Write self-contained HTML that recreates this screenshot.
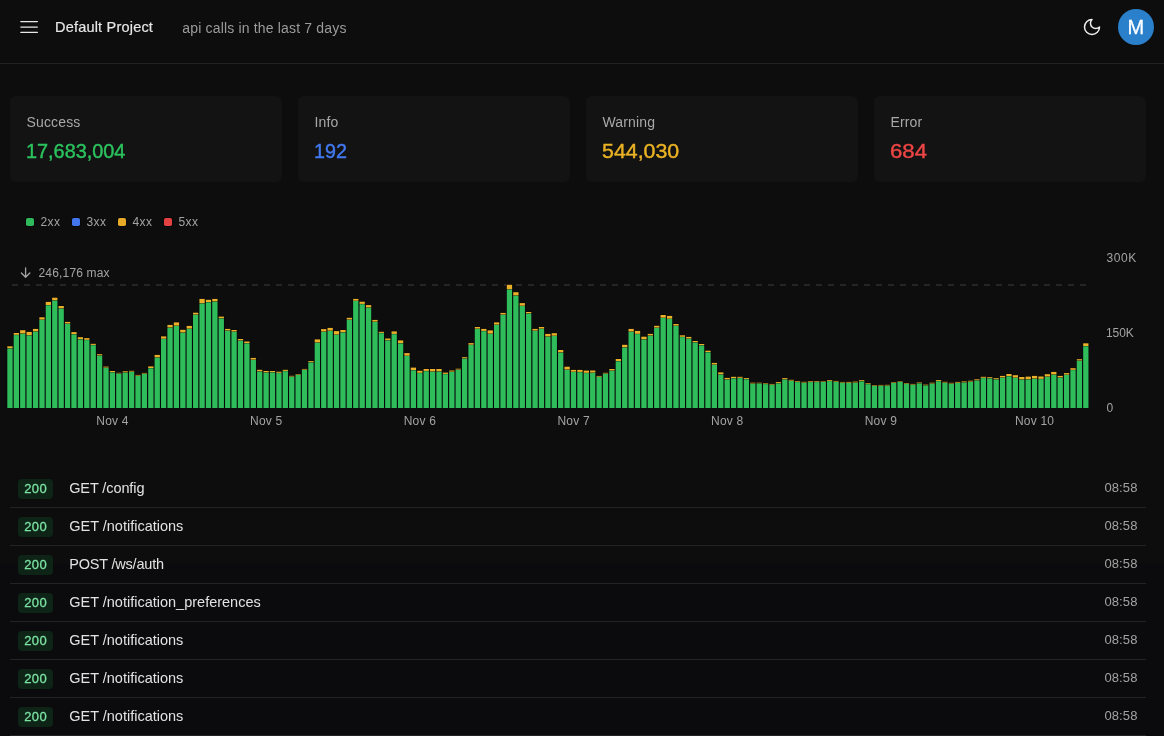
<!DOCTYPE html>
<html lang="en"><head><meta charset="utf-8"><title>Default Project</title>
<style>
*{box-sizing:border-box;margin:0;padding:0}
html,body{width:1164px;height:736px;overflow:hidden;background:linear-gradient(#0d0d0d 0,#0d0d0d 561px,#0b0b0d 566px,#0b0b0d 736px);color:#e5e5e5;font-family:"Liberation Sans",sans-serif}
.header{position:absolute;left:0;top:0;width:1164px;height:64px;border-bottom:1px solid #222224}
.burger{position:absolute;left:20px;top:21px;width:18px;height:14px}
.title{position:absolute;left:55px;top:17px;font-size:14.5px;line-height:20px;color:#e6e6e6;white-space:nowrap;-webkit-text-stroke:0.18px #e6e6e6;letter-spacing:0.2px}
.sub{position:absolute;left:182.3px;top:18px;font-size:14px;line-height:20px;color:#9b9b9b;white-space:nowrap;letter-spacing:0.17px}
.moon{position:absolute;left:1082px;top:17px;width:20px;height:20px}
.avatar{position:absolute;left:1118px;top:9px;width:36px;height:36px;border-radius:50%;background:#2a80cb;color:#fff;font-size:20px;line-height:36px;text-align:center;-webkit-text-stroke:0.3px #fff;text-indent:-0.5px}
.card{position:absolute;top:96px;width:272px;height:86px;background:#131313;border-radius:6px}
.card .l{position:absolute;left:16.5px;top:16px;font-size:14px;line-height:20px;color:#a8a8a8;white-space:nowrap;letter-spacing:0.15px}
.card .v{position:absolute;left:16px;top:41px;font-size:20px;line-height:28px;white-space:nowrap;-webkit-text-stroke:0.4px currentColor;transform-origin:0 50%}
.legend{position:absolute;left:26px;top:214px;height:16px;font-size:12px;line-height:16px;color:#a3a3a3;white-space:nowrap}
.legend i{position:absolute;top:4px;width:8px;height:8px;border-radius:1.8px;box-shadow:0 0 0 0.5px #060608}
.legend span{position:absolute;top:0;letter-spacing:0.4px;margin-left:0.5px}
svg.chart{position:absolute;left:0;top:0;width:1164px;height:440px}
.ax{font-family:"Liberation Sans",sans-serif;font-size:12px;fill:#a3a3a3}
.list{position:absolute;left:10px;top:470px;width:1136px}
.row{position:relative;height:38px;border-bottom:1px solid #232325}
.badge{position:absolute;left:8px;top:9px;width:35px;height:20px;letter-spacing:0.3px;text-indent:0.3px;border-radius:4px;background:#0d2417;color:#7ce2a2;font-size:13px;line-height:20px;text-align:center;-webkit-text-stroke:0.3px currentColor}
.path{position:absolute;left:59.2px;top:8px;font-size:14.5px;line-height:20px;color:#e2e2e2;white-space:nowrap}
.time{position:absolute;right:8.5px;letter-spacing:0.1px;top:8px;font-size:13px;line-height:20px;color:#a3a3a3;white-space:nowrap}
#wrap{position:absolute;left:0;top:0;width:1164px;height:736px;will-change:transform}
</style></head><body><div id="wrap">
<div class="header">
 <svg class="burger" viewBox="0 0 18 14"><path d="M0.9 0.6h16.4M0.9 6.05h16.4M0.9 11.4h16.4" stroke="#e8e8e8" stroke-width="1.35" stroke-linecap="round" fill="none"/></svg>
 <div class="title">Default Project</div>
 <div class="sub">api calls in the last 7 days</div>
 <svg class="moon" viewBox="0 0 24 24" fill="none" stroke="#ededed" stroke-width="1.8" stroke-linecap="round" stroke-linejoin="round"><path d="M12 3a6 6 0 0 0 9 9 9 9 0 1 1-9-9Z"/></svg>
 <div class="avatar">M</div>
</div>
<div class="card" style="left:10px"><div class="l">Success</div><div class="v" style="color:#2cc35e;transform:scaleX(0.993)">17,683,004</div></div>
<div class="card" style="left:298px"><div class="l">Info</div><div class="v" style="color:#4279f0;transform:scaleX(0.985)">192</div></div>
<div class="card" style="left:586px"><div class="l">Warning</div><div class="v" style="color:#eab224;transform:scaleX(1.068)">544,030</div></div>
<div class="card" style="left:874px"><div class="l">Error</div><div class="v" style="color:#ee4545;transform:scaleX(1.11)">684</div></div>
<div class="legend">
 <i style="left:0;background:#2eb95a"></i><span style="left:14px">2xx</span>
 <i style="left:46px;background:#4275ee"></i><span style="left:60px">3xx</span>
 <i style="left:92px;background:#e6aa28"></i><span style="left:106px">4xx</span>
 <i style="left:138px;background:#e44242"></i><span style="left:152px">5xx</span>
</div>
<svg class="chart" viewBox="0 0 1164 440">
 <path d="M25.6 267.8v9.4M21.4 273l4.2 4.2 4.2-4.2" stroke="#a3a3a3" stroke-width="1.3" fill="none" stroke-linecap="round" stroke-linejoin="round"/>
 <text x="38.5" y="276.5" class="ax" style="letter-spacing:0.17px">246,176 max</text>
 <line x1="12" y1="285" x2="1089" y2="285" stroke="#2e2e31" stroke-width="1.4" stroke-dasharray="6 6"/>
 <rect x="6.75" y="345.75" width="6.40" height="62.30" fill="#060608"/>
<rect x="7.30" y="348.50" width="5.30" height="59.50" fill="#2fbd5c"/>
<rect x="7.30" y="346.30" width="5.30" height="1.90" fill="#eab02a"/>
<rect x="13.15" y="332.45" width="6.40" height="75.60" fill="#060608"/>
<rect x="13.70" y="335.10" width="5.30" height="72.90" fill="#2fbd5c"/>
<rect x="13.70" y="333.00" width="5.30" height="1.80" fill="#eab02a"/>
<rect x="19.56" y="329.65" width="6.40" height="78.40" fill="#060608"/>
<rect x="20.11" y="333.70" width="5.30" height="74.30" fill="#2fbd5c"/>
<rect x="20.11" y="330.20" width="5.30" height="3.20" fill="#eab02a"/>
<rect x="25.96" y="331.35" width="6.40" height="76.70" fill="#060608"/>
<rect x="26.51" y="335.50" width="5.30" height="72.50" fill="#2fbd5c"/>
<rect x="26.51" y="331.90" width="5.30" height="3.30" fill="#eab02a"/>
<rect x="32.37" y="328.35" width="6.40" height="79.70" fill="#060608"/>
<rect x="32.92" y="331.60" width="5.30" height="76.40" fill="#2fbd5c"/>
<rect x="32.92" y="328.90" width="5.30" height="2.40" fill="#eab02a"/>
<rect x="38.77" y="316.75" width="6.40" height="91.30" fill="#060608"/>
<rect x="39.32" y="319.90" width="5.30" height="88.10" fill="#2fbd5c"/>
<rect x="39.32" y="317.30" width="5.30" height="2.30" fill="#eab02a"/>
<rect x="45.17" y="301.35" width="6.40" height="106.70" fill="#060608"/>
<rect x="45.72" y="305.30" width="5.30" height="102.70" fill="#2fbd5c"/>
<rect x="45.72" y="301.90" width="5.30" height="3.10" fill="#eab02a"/>
<rect x="51.58" y="297.15" width="6.40" height="110.90" fill="#060608"/>
<rect x="52.13" y="300.50" width="5.30" height="107.50" fill="#2fbd5c"/>
<rect x="52.13" y="297.70" width="5.30" height="2.50" fill="#eab02a"/>
<rect x="57.98" y="305.45" width="6.40" height="102.60" fill="#060608"/>
<rect x="58.53" y="308.60" width="5.30" height="99.40" fill="#2fbd5c"/>
<rect x="58.53" y="306.00" width="5.30" height="2.30" fill="#eab02a"/>
<rect x="64.39" y="321.35" width="6.40" height="86.70" fill="#060608"/>
<rect x="64.94" y="323.80" width="5.30" height="84.20" fill="#2fbd5c"/>
<rect x="64.94" y="321.90" width="5.30" height="1.60" fill="#eab02a"/>
<rect x="70.79" y="331.55" width="6.40" height="76.50" fill="#060608"/>
<rect x="71.34" y="334.40" width="5.30" height="73.60" fill="#2fbd5c"/>
<rect x="71.34" y="332.10" width="5.30" height="2.00" fill="#eab02a"/>
<rect x="77.19" y="336.65" width="6.40" height="71.40" fill="#060608"/>
<rect x="77.74" y="339.40" width="5.30" height="68.60" fill="#2fbd5c"/>
<rect x="77.74" y="337.20" width="5.30" height="1.90" fill="#eab02a"/>
<rect x="83.60" y="337.55" width="6.40" height="70.50" fill="#060608"/>
<rect x="84.15" y="340.10" width="5.30" height="67.90" fill="#2fbd5c"/>
<rect x="84.15" y="338.10" width="5.30" height="1.70" fill="#eab02a"/>
<rect x="90.00" y="343.25" width="6.40" height="64.80" fill="#060608"/>
<rect x="90.55" y="345.20" width="5.30" height="62.80" fill="#2fbd5c"/>
<rect x="90.55" y="343.80" width="5.30" height="1.10" fill="#eab02a"/>
<rect x="96.41" y="353.65" width="6.40" height="54.40" fill="#060608"/>
<rect x="96.96" y="355.60" width="5.30" height="52.40" fill="#2fbd5c"/>
<rect x="96.96" y="354.20" width="5.30" height="1.10" fill="#eab02a"/>
<rect x="102.81" y="366.05" width="6.40" height="42.00" fill="#060608"/>
<rect x="103.36" y="367.80" width="5.30" height="40.20" fill="#2fbd5c"/>
<rect x="103.36" y="366.60" width="5.30" height="0.90" fill="#eab02a"/>
<rect x="109.21" y="370.45" width="6.40" height="37.60" fill="#060608"/>
<rect x="109.76" y="372.40" width="5.30" height="35.60" fill="#2fbd5c"/>
<rect x="109.76" y="371.00" width="5.30" height="1.10" fill="#eab02a"/>
<rect x="115.62" y="372.25" width="6.40" height="35.80" fill="#060608"/>
<rect x="116.17" y="373.60" width="5.30" height="34.40" fill="#2fbd5c"/>
<rect x="116.17" y="372.80" width="5.30" height="0.50" fill="#eab02a"/>
<rect x="122.02" y="370.75" width="6.40" height="37.30" fill="#060608"/>
<rect x="122.57" y="372.60" width="5.30" height="35.40" fill="#2fbd5c"/>
<rect x="122.57" y="371.30" width="5.30" height="1.00" fill="#eab02a"/>
<rect x="128.43" y="370.25" width="6.40" height="37.80" fill="#060608"/>
<rect x="128.98" y="371.90" width="5.30" height="36.10" fill="#2fbd5c"/>
<rect x="128.98" y="370.80" width="5.30" height="0.80" fill="#eab02a"/>
<rect x="134.83" y="374.35" width="6.40" height="33.70" fill="#060608"/>
<rect x="135.38" y="375.90" width="5.30" height="32.10" fill="#2fbd5c"/>
<rect x="135.38" y="374.90" width="5.30" height="0.70" fill="#eab02a"/>
<rect x="141.23" y="372.35" width="6.40" height="35.70" fill="#060608"/>
<rect x="141.78" y="373.80" width="5.30" height="34.20" fill="#2fbd5c"/>
<rect x="141.78" y="372.90" width="5.30" height="0.60" fill="#eab02a"/>
<rect x="147.64" y="365.85" width="6.40" height="42.20" fill="#060608"/>
<rect x="148.19" y="368.30" width="5.30" height="39.70" fill="#2fbd5c"/>
<rect x="148.19" y="366.40" width="5.30" height="1.60" fill="#eab02a"/>
<rect x="154.04" y="354.35" width="6.40" height="53.70" fill="#060608"/>
<rect x="154.59" y="357.60" width="5.30" height="50.40" fill="#2fbd5c"/>
<rect x="154.59" y="354.90" width="5.30" height="2.40" fill="#eab02a"/>
<rect x="160.45" y="335.85" width="6.40" height="72.20" fill="#060608"/>
<rect x="161.00" y="339.00" width="5.30" height="69.00" fill="#2fbd5c"/>
<rect x="161.00" y="336.40" width="5.30" height="2.30" fill="#eab02a"/>
<rect x="166.85" y="324.35" width="6.40" height="83.70" fill="#060608"/>
<rect x="167.40" y="327.70" width="5.30" height="80.30" fill="#2fbd5c"/>
<rect x="167.40" y="324.90" width="5.30" height="2.50" fill="#eab02a"/>
<rect x="173.25" y="321.85" width="6.40" height="86.20" fill="#060608"/>
<rect x="173.80" y="325.90" width="5.30" height="82.10" fill="#2fbd5c"/>
<rect x="173.80" y="322.40" width="5.30" height="3.20" fill="#eab02a"/>
<rect x="179.66" y="329.25" width="6.40" height="78.80" fill="#060608"/>
<rect x="180.21" y="332.70" width="5.30" height="75.30" fill="#2fbd5c"/>
<rect x="180.21" y="329.80" width="5.30" height="2.60" fill="#eab02a"/>
<rect x="186.06" y="325.35" width="6.40" height="82.70" fill="#060608"/>
<rect x="186.61" y="328.90" width="5.30" height="79.10" fill="#2fbd5c"/>
<rect x="186.61" y="325.90" width="5.30" height="2.70" fill="#eab02a"/>
<rect x="192.47" y="312.15" width="6.40" height="95.90" fill="#060608"/>
<rect x="193.02" y="314.80" width="5.30" height="93.20" fill="#2fbd5c"/>
<rect x="193.02" y="312.70" width="5.30" height="1.80" fill="#eab02a"/>
<rect x="198.87" y="298.35" width="6.40" height="109.70" fill="#060608"/>
<rect x="199.42" y="303.50" width="5.30" height="104.50" fill="#2fbd5c"/>
<rect x="199.42" y="298.90" width="5.30" height="4.30" fill="#eab02a"/>
<rect x="205.27" y="299.25" width="6.40" height="108.80" fill="#060608"/>
<rect x="205.82" y="302.30" width="5.30" height="105.70" fill="#2fbd5c"/>
<rect x="205.82" y="299.80" width="5.30" height="2.20" fill="#eab02a"/>
<rect x="211.68" y="298.35" width="6.40" height="109.70" fill="#060608"/>
<rect x="212.23" y="301.60" width="5.30" height="106.40" fill="#2fbd5c"/>
<rect x="212.23" y="298.90" width="5.30" height="2.40" fill="#eab02a"/>
<rect x="218.08" y="316.05" width="6.40" height="92.00" fill="#060608"/>
<rect x="218.63" y="318.50" width="5.30" height="89.50" fill="#2fbd5c"/>
<rect x="218.63" y="316.60" width="5.30" height="1.60" fill="#eab02a"/>
<rect x="224.49" y="328.35" width="6.40" height="79.70" fill="#060608"/>
<rect x="225.04" y="330.70" width="5.30" height="77.30" fill="#2fbd5c"/>
<rect x="225.04" y="328.90" width="5.30" height="1.50" fill="#eab02a"/>
<rect x="230.89" y="329.45" width="6.40" height="78.60" fill="#060608"/>
<rect x="231.44" y="331.80" width="5.30" height="76.20" fill="#2fbd5c"/>
<rect x="231.44" y="330.00" width="5.30" height="1.50" fill="#eab02a"/>
<rect x="237.29" y="338.45" width="6.40" height="69.60" fill="#060608"/>
<rect x="237.84" y="340.60" width="5.30" height="67.40" fill="#2fbd5c"/>
<rect x="237.84" y="339.00" width="5.30" height="1.30" fill="#eab02a"/>
<rect x="243.70" y="340.95" width="6.40" height="67.10" fill="#060608"/>
<rect x="244.25" y="343.40" width="5.30" height="64.60" fill="#2fbd5c"/>
<rect x="244.25" y="341.50" width="5.30" height="1.60" fill="#eab02a"/>
<rect x="250.10" y="357.35" width="6.40" height="50.70" fill="#060608"/>
<rect x="250.65" y="359.90" width="5.30" height="48.10" fill="#2fbd5c"/>
<rect x="250.65" y="357.90" width="5.30" height="1.70" fill="#eab02a"/>
<rect x="256.51" y="369.25" width="6.40" height="38.80" fill="#060608"/>
<rect x="257.06" y="371.50" width="5.30" height="36.50" fill="#2fbd5c"/>
<rect x="257.06" y="369.80" width="5.30" height="1.40" fill="#eab02a"/>
<rect x="262.91" y="370.45" width="6.40" height="37.60" fill="#060608"/>
<rect x="263.46" y="372.60" width="5.30" height="35.40" fill="#2fbd5c"/>
<rect x="263.46" y="371.00" width="5.30" height="1.30" fill="#eab02a"/>
<rect x="269.31" y="370.45" width="6.40" height="37.60" fill="#060608"/>
<rect x="269.86" y="372.40" width="5.30" height="35.60" fill="#2fbd5c"/>
<rect x="269.86" y="371.00" width="5.30" height="1.10" fill="#eab02a"/>
<rect x="275.72" y="371.15" width="6.40" height="36.90" fill="#060608"/>
<rect x="276.27" y="373.10" width="5.30" height="34.90" fill="#2fbd5c"/>
<rect x="276.27" y="371.70" width="5.30" height="1.10" fill="#eab02a"/>
<rect x="282.12" y="369.25" width="6.40" height="38.80" fill="#060608"/>
<rect x="282.67" y="371.20" width="5.30" height="36.80" fill="#2fbd5c"/>
<rect x="282.67" y="369.80" width="5.30" height="1.10" fill="#eab02a"/>
<rect x="288.53" y="375.25" width="6.40" height="32.80" fill="#060608"/>
<rect x="289.08" y="376.80" width="5.30" height="31.20" fill="#2fbd5c"/>
<rect x="289.08" y="375.80" width="5.30" height="0.70" fill="#eab02a"/>
<rect x="294.93" y="373.45" width="6.40" height="34.60" fill="#060608"/>
<rect x="295.48" y="374.90" width="5.30" height="33.10" fill="#2fbd5c"/>
<rect x="295.48" y="374.00" width="5.30" height="0.60" fill="#eab02a"/>
<rect x="301.33" y="368.35" width="6.40" height="39.70" fill="#060608"/>
<rect x="301.88" y="369.90" width="5.30" height="38.10" fill="#2fbd5c"/>
<rect x="301.88" y="368.90" width="5.30" height="0.70" fill="#eab02a"/>
<rect x="307.74" y="360.55" width="6.40" height="47.50" fill="#060608"/>
<rect x="308.29" y="362.50" width="5.30" height="45.50" fill="#2fbd5c"/>
<rect x="308.29" y="361.10" width="5.30" height="1.10" fill="#eab02a"/>
<rect x="314.14" y="338.85" width="6.40" height="69.20" fill="#060608"/>
<rect x="314.69" y="342.70" width="5.30" height="65.30" fill="#2fbd5c"/>
<rect x="314.69" y="339.40" width="5.30" height="3.00" fill="#eab02a"/>
<rect x="320.55" y="328.55" width="6.40" height="79.50" fill="#060608"/>
<rect x="321.10" y="331.80" width="5.30" height="76.20" fill="#2fbd5c"/>
<rect x="321.10" y="329.10" width="5.30" height="2.40" fill="#eab02a"/>
<rect x="326.95" y="327.35" width="6.40" height="80.70" fill="#060608"/>
<rect x="327.50" y="330.90" width="5.30" height="77.10" fill="#2fbd5c"/>
<rect x="327.50" y="327.90" width="5.30" height="2.70" fill="#eab02a"/>
<rect x="333.35" y="330.55" width="6.40" height="77.50" fill="#060608"/>
<rect x="333.90" y="334.80" width="5.30" height="73.20" fill="#2fbd5c"/>
<rect x="333.90" y="331.10" width="5.30" height="3.40" fill="#eab02a"/>
<rect x="339.76" y="329.45" width="6.40" height="78.60" fill="#060608"/>
<rect x="340.31" y="332.50" width="5.30" height="75.50" fill="#2fbd5c"/>
<rect x="340.31" y="330.00" width="5.30" height="2.20" fill="#eab02a"/>
<rect x="346.16" y="317.25" width="6.40" height="90.80" fill="#060608"/>
<rect x="346.71" y="319.80" width="5.30" height="88.20" fill="#2fbd5c"/>
<rect x="346.71" y="317.80" width="5.30" height="1.70" fill="#eab02a"/>
<rect x="352.57" y="298.35" width="6.40" height="109.70" fill="#060608"/>
<rect x="353.12" y="301.00" width="5.30" height="107.00" fill="#2fbd5c"/>
<rect x="353.12" y="298.90" width="5.30" height="1.80" fill="#eab02a"/>
<rect x="358.97" y="301.15" width="6.40" height="106.90" fill="#060608"/>
<rect x="359.52" y="304.20" width="5.30" height="103.80" fill="#2fbd5c"/>
<rect x="359.52" y="301.70" width="5.30" height="2.20" fill="#eab02a"/>
<rect x="365.37" y="304.55" width="6.40" height="103.50" fill="#060608"/>
<rect x="365.92" y="307.70" width="5.30" height="100.30" fill="#2fbd5c"/>
<rect x="365.92" y="305.10" width="5.30" height="2.30" fill="#eab02a"/>
<rect x="371.78" y="319.35" width="6.40" height="88.70" fill="#060608"/>
<rect x="372.33" y="321.90" width="5.30" height="86.10" fill="#2fbd5c"/>
<rect x="372.33" y="319.90" width="5.30" height="1.70" fill="#eab02a"/>
<rect x="378.18" y="331.25" width="6.40" height="76.80" fill="#060608"/>
<rect x="378.73" y="333.20" width="5.30" height="74.80" fill="#2fbd5c"/>
<rect x="378.73" y="331.80" width="5.30" height="1.10" fill="#eab02a"/>
<rect x="384.59" y="337.95" width="6.40" height="70.10" fill="#060608"/>
<rect x="385.14" y="340.40" width="5.30" height="67.60" fill="#2fbd5c"/>
<rect x="385.14" y="338.50" width="5.30" height="1.60" fill="#eab02a"/>
<rect x="390.99" y="330.85" width="6.40" height="77.20" fill="#060608"/>
<rect x="391.54" y="334.20" width="5.30" height="73.80" fill="#2fbd5c"/>
<rect x="391.54" y="331.40" width="5.30" height="2.50" fill="#eab02a"/>
<rect x="397.39" y="339.85" width="6.40" height="68.20" fill="#060608"/>
<rect x="397.94" y="343.40" width="5.30" height="64.60" fill="#2fbd5c"/>
<rect x="397.94" y="340.40" width="5.30" height="2.70" fill="#eab02a"/>
<rect x="403.80" y="352.55" width="6.40" height="55.50" fill="#060608"/>
<rect x="404.35" y="356.00" width="5.30" height="52.00" fill="#2fbd5c"/>
<rect x="404.35" y="353.10" width="5.30" height="2.60" fill="#eab02a"/>
<rect x="410.20" y="367.05" width="6.40" height="41.00" fill="#060608"/>
<rect x="410.75" y="370.30" width="5.30" height="37.70" fill="#2fbd5c"/>
<rect x="410.75" y="367.60" width="5.30" height="2.40" fill="#eab02a"/>
<rect x="416.61" y="370.25" width="6.40" height="37.80" fill="#060608"/>
<rect x="417.16" y="373.10" width="5.30" height="34.90" fill="#2fbd5c"/>
<rect x="417.16" y="370.80" width="5.30" height="2.00" fill="#eab02a"/>
<rect x="423.01" y="368.45" width="6.40" height="39.60" fill="#060608"/>
<rect x="423.56" y="371.20" width="5.30" height="36.80" fill="#2fbd5c"/>
<rect x="423.56" y="369.00" width="5.30" height="1.90" fill="#eab02a"/>
<rect x="429.41" y="368.45" width="6.40" height="39.60" fill="#060608"/>
<rect x="429.96" y="371.70" width="5.30" height="36.30" fill="#2fbd5c"/>
<rect x="429.96" y="369.00" width="5.30" height="2.40" fill="#eab02a"/>
<rect x="435.82" y="368.45" width="6.40" height="39.60" fill="#060608"/>
<rect x="436.37" y="371.50" width="5.30" height="36.50" fill="#2fbd5c"/>
<rect x="436.37" y="369.00" width="5.30" height="2.20" fill="#eab02a"/>
<rect x="442.22" y="372.05" width="6.40" height="36.00" fill="#060608"/>
<rect x="442.77" y="374.20" width="5.30" height="33.80" fill="#2fbd5c"/>
<rect x="442.77" y="372.60" width="5.30" height="1.30" fill="#eab02a"/>
<rect x="448.63" y="369.95" width="6.40" height="38.10" fill="#060608"/>
<rect x="449.18" y="371.90" width="5.30" height="36.10" fill="#2fbd5c"/>
<rect x="449.18" y="370.50" width="5.30" height="1.10" fill="#eab02a"/>
<rect x="455.03" y="368.15" width="6.40" height="39.90" fill="#060608"/>
<rect x="455.58" y="369.80" width="5.30" height="38.20" fill="#2fbd5c"/>
<rect x="455.58" y="368.70" width="5.30" height="0.80" fill="#eab02a"/>
<rect x="461.43" y="356.65" width="6.40" height="51.40" fill="#060608"/>
<rect x="461.98" y="358.60" width="5.30" height="49.40" fill="#2fbd5c"/>
<rect x="461.98" y="357.20" width="5.30" height="1.10" fill="#eab02a"/>
<rect x="467.84" y="342.55" width="6.40" height="65.50" fill="#060608"/>
<rect x="468.39" y="345.00" width="5.30" height="63.00" fill="#2fbd5c"/>
<rect x="468.39" y="343.10" width="5.30" height="1.60" fill="#eab02a"/>
<rect x="474.24" y="326.45" width="6.40" height="81.60" fill="#060608"/>
<rect x="474.79" y="328.90" width="5.30" height="79.10" fill="#2fbd5c"/>
<rect x="474.79" y="327.00" width="5.30" height="1.60" fill="#eab02a"/>
<rect x="480.65" y="328.35" width="6.40" height="79.70" fill="#060608"/>
<rect x="481.20" y="331.20" width="5.30" height="76.80" fill="#2fbd5c"/>
<rect x="481.20" y="328.90" width="5.30" height="2.00" fill="#eab02a"/>
<rect x="487.05" y="329.85" width="6.40" height="78.20" fill="#060608"/>
<rect x="487.60" y="333.90" width="5.30" height="74.10" fill="#2fbd5c"/>
<rect x="487.60" y="330.40" width="5.30" height="3.20" fill="#eab02a"/>
<rect x="493.45" y="321.85" width="6.40" height="86.20" fill="#060608"/>
<rect x="494.00" y="324.90" width="5.30" height="83.10" fill="#2fbd5c"/>
<rect x="494.00" y="322.40" width="5.30" height="2.20" fill="#eab02a"/>
<rect x="499.86" y="312.35" width="6.40" height="95.70" fill="#060608"/>
<rect x="500.41" y="314.80" width="5.30" height="93.20" fill="#2fbd5c"/>
<rect x="500.41" y="312.90" width="5.30" height="1.60" fill="#eab02a"/>
<rect x="506.26" y="284.25" width="6.40" height="123.80" fill="#060608"/>
<rect x="506.81" y="289.50" width="5.30" height="118.50" fill="#2fbd5c"/>
<rect x="506.81" y="284.80" width="5.30" height="4.40" fill="#eab02a"/>
<rect x="512.67" y="291.65" width="6.40" height="116.40" fill="#060608"/>
<rect x="513.22" y="295.70" width="5.30" height="112.30" fill="#2fbd5c"/>
<rect x="513.22" y="292.20" width="5.30" height="3.20" fill="#eab02a"/>
<rect x="519.07" y="302.55" width="6.40" height="105.50" fill="#060608"/>
<rect x="519.62" y="306.00" width="5.30" height="102.00" fill="#2fbd5c"/>
<rect x="519.62" y="303.10" width="5.30" height="2.60" fill="#eab02a"/>
<rect x="525.47" y="311.45" width="6.40" height="96.60" fill="#060608"/>
<rect x="526.02" y="313.60" width="5.30" height="94.40" fill="#2fbd5c"/>
<rect x="526.02" y="312.00" width="5.30" height="1.30" fill="#eab02a"/>
<rect x="531.88" y="328.35" width="6.40" height="79.70" fill="#060608"/>
<rect x="532.43" y="330.90" width="5.30" height="77.10" fill="#2fbd5c"/>
<rect x="532.43" y="328.90" width="5.30" height="1.70" fill="#eab02a"/>
<rect x="538.28" y="326.45" width="6.40" height="81.60" fill="#060608"/>
<rect x="538.83" y="328.90" width="5.30" height="79.10" fill="#2fbd5c"/>
<rect x="538.83" y="327.00" width="5.30" height="1.60" fill="#eab02a"/>
<rect x="544.69" y="333.35" width="6.40" height="74.70" fill="#060608"/>
<rect x="545.24" y="336.70" width="5.30" height="71.30" fill="#2fbd5c"/>
<rect x="545.24" y="333.90" width="5.30" height="2.50" fill="#eab02a"/>
<rect x="551.09" y="332.65" width="6.40" height="75.40" fill="#060608"/>
<rect x="551.64" y="336.00" width="5.30" height="72.00" fill="#2fbd5c"/>
<rect x="551.64" y="333.20" width="5.30" height="2.50" fill="#eab02a"/>
<rect x="557.49" y="349.45" width="6.40" height="58.60" fill="#060608"/>
<rect x="558.04" y="352.60" width="5.30" height="55.40" fill="#2fbd5c"/>
<rect x="558.04" y="350.00" width="5.30" height="2.30" fill="#eab02a"/>
<rect x="563.90" y="366.15" width="6.40" height="41.90" fill="#060608"/>
<rect x="564.45" y="369.80" width="5.30" height="38.20" fill="#2fbd5c"/>
<rect x="564.45" y="366.70" width="5.30" height="2.80" fill="#eab02a"/>
<rect x="570.30" y="369.35" width="6.40" height="38.70" fill="#060608"/>
<rect x="570.85" y="372.00" width="5.30" height="36.00" fill="#2fbd5c"/>
<rect x="570.85" y="369.90" width="5.30" height="1.80" fill="#eab02a"/>
<rect x="576.71" y="369.35" width="6.40" height="38.70" fill="#060608"/>
<rect x="577.26" y="372.20" width="5.30" height="35.80" fill="#2fbd5c"/>
<rect x="577.26" y="369.90" width="5.30" height="2.00" fill="#eab02a"/>
<rect x="583.11" y="370.05" width="6.40" height="38.00" fill="#060608"/>
<rect x="583.66" y="373.10" width="5.30" height="34.90" fill="#2fbd5c"/>
<rect x="583.66" y="370.60" width="5.30" height="2.20" fill="#eab02a"/>
<rect x="589.51" y="369.95" width="6.40" height="38.10" fill="#060608"/>
<rect x="590.06" y="372.80" width="5.30" height="35.20" fill="#2fbd5c"/>
<rect x="590.06" y="370.50" width="5.30" height="2.00" fill="#eab02a"/>
<rect x="595.92" y="375.35" width="6.40" height="32.70" fill="#060608"/>
<rect x="596.47" y="377.00" width="5.30" height="31.00" fill="#2fbd5c"/>
<rect x="596.47" y="375.90" width="5.30" height="0.80" fill="#eab02a"/>
<rect x="602.32" y="372.25" width="6.40" height="35.80" fill="#060608"/>
<rect x="602.87" y="373.80" width="5.30" height="34.20" fill="#2fbd5c"/>
<rect x="602.87" y="372.80" width="5.30" height="0.70" fill="#eab02a"/>
<rect x="608.73" y="368.45" width="6.40" height="39.60" fill="#060608"/>
<rect x="609.28" y="370.80" width="5.30" height="37.20" fill="#2fbd5c"/>
<rect x="609.28" y="369.00" width="5.30" height="1.50" fill="#eab02a"/>
<rect x="615.13" y="358.45" width="6.40" height="49.60" fill="#060608"/>
<rect x="615.68" y="361.30" width="5.30" height="46.70" fill="#2fbd5c"/>
<rect x="615.68" y="359.00" width="5.30" height="2.00" fill="#eab02a"/>
<rect x="621.53" y="344.25" width="6.40" height="63.80" fill="#060608"/>
<rect x="622.08" y="347.50" width="5.30" height="60.50" fill="#2fbd5c"/>
<rect x="622.08" y="344.80" width="5.30" height="2.40" fill="#eab02a"/>
<rect x="627.94" y="328.35" width="6.40" height="79.70" fill="#060608"/>
<rect x="628.49" y="331.80" width="5.30" height="76.20" fill="#2fbd5c"/>
<rect x="628.49" y="328.90" width="5.30" height="2.60" fill="#eab02a"/>
<rect x="634.34" y="330.35" width="6.40" height="77.70" fill="#060608"/>
<rect x="634.89" y="334.10" width="5.30" height="73.90" fill="#2fbd5c"/>
<rect x="634.89" y="330.90" width="5.30" height="2.90" fill="#eab02a"/>
<rect x="640.75" y="336.15" width="6.40" height="71.90" fill="#060608"/>
<rect x="641.30" y="339.50" width="5.30" height="68.50" fill="#2fbd5c"/>
<rect x="641.30" y="336.70" width="5.30" height="2.50" fill="#eab02a"/>
<rect x="647.15" y="333.35" width="6.40" height="74.70" fill="#060608"/>
<rect x="647.70" y="335.70" width="5.30" height="72.30" fill="#2fbd5c"/>
<rect x="647.70" y="333.90" width="5.30" height="1.50" fill="#eab02a"/>
<rect x="653.55" y="325.25" width="6.40" height="82.80" fill="#060608"/>
<rect x="654.10" y="327.90" width="5.30" height="80.10" fill="#2fbd5c"/>
<rect x="654.10" y="325.80" width="5.30" height="1.80" fill="#eab02a"/>
<rect x="659.96" y="314.45" width="6.40" height="93.60" fill="#060608"/>
<rect x="660.51" y="318.00" width="5.30" height="90.00" fill="#2fbd5c"/>
<rect x="660.51" y="315.00" width="5.30" height="2.70" fill="#eab02a"/>
<rect x="666.36" y="315.35" width="6.40" height="92.70" fill="#060608"/>
<rect x="666.91" y="319.00" width="5.30" height="89.00" fill="#2fbd5c"/>
<rect x="666.91" y="315.90" width="5.30" height="2.80" fill="#eab02a"/>
<rect x="672.77" y="323.45" width="6.40" height="84.60" fill="#060608"/>
<rect x="673.32" y="325.90" width="5.30" height="82.10" fill="#2fbd5c"/>
<rect x="673.32" y="324.00" width="5.30" height="1.60" fill="#eab02a"/>
<rect x="679.17" y="334.75" width="6.40" height="73.30" fill="#060608"/>
<rect x="679.72" y="337.10" width="5.30" height="70.90" fill="#2fbd5c"/>
<rect x="679.72" y="335.30" width="5.30" height="1.50" fill="#eab02a"/>
<rect x="685.57" y="336.35" width="6.40" height="71.70" fill="#060608"/>
<rect x="686.12" y="338.80" width="5.30" height="69.20" fill="#2fbd5c"/>
<rect x="686.12" y="336.90" width="5.30" height="1.60" fill="#eab02a"/>
<rect x="691.98" y="340.45" width="6.40" height="67.60" fill="#060608"/>
<rect x="692.53" y="342.50" width="5.30" height="65.50" fill="#2fbd5c"/>
<rect x="692.53" y="341.00" width="5.30" height="1.20" fill="#eab02a"/>
<rect x="698.38" y="343.45" width="6.40" height="64.60" fill="#060608"/>
<rect x="698.93" y="345.40" width="5.30" height="62.60" fill="#2fbd5c"/>
<rect x="698.93" y="344.00" width="5.30" height="1.10" fill="#eab02a"/>
<rect x="704.79" y="350.15" width="6.40" height="57.90" fill="#060608"/>
<rect x="705.34" y="352.30" width="5.30" height="55.70" fill="#2fbd5c"/>
<rect x="705.34" y="350.70" width="5.30" height="1.30" fill="#eab02a"/>
<rect x="711.19" y="362.35" width="6.40" height="45.70" fill="#060608"/>
<rect x="711.74" y="364.80" width="5.30" height="43.20" fill="#2fbd5c"/>
<rect x="711.74" y="362.90" width="5.30" height="1.60" fill="#eab02a"/>
<rect x="717.59" y="371.85" width="6.40" height="36.20" fill="#060608"/>
<rect x="718.14" y="374.50" width="5.30" height="33.50" fill="#2fbd5c"/>
<rect x="718.14" y="372.40" width="5.30" height="1.80" fill="#eab02a"/>
<rect x="724.00" y="377.35" width="6.40" height="30.70" fill="#060608"/>
<rect x="724.55" y="379.60" width="5.30" height="28.40" fill="#2fbd5c"/>
<rect x="724.55" y="377.90" width="5.30" height="1.40" fill="#eab02a"/>
<rect x="730.40" y="376.25" width="6.40" height="31.80" fill="#060608"/>
<rect x="730.95" y="378.40" width="5.30" height="29.60" fill="#2fbd5c"/>
<rect x="730.95" y="376.80" width="5.30" height="1.30" fill="#eab02a"/>
<rect x="736.81" y="376.25" width="6.40" height="31.80" fill="#060608"/>
<rect x="737.36" y="378.10" width="5.30" height="29.90" fill="#2fbd5c"/>
<rect x="737.36" y="376.80" width="5.30" height="1.00" fill="#eab02a"/>
<rect x="743.21" y="377.55" width="6.40" height="30.50" fill="#060608"/>
<rect x="743.76" y="379.30" width="5.30" height="28.70" fill="#2fbd5c"/>
<rect x="743.76" y="378.10" width="5.30" height="0.90" fill="#eab02a"/>
<rect x="749.61" y="382.15" width="6.40" height="25.90" fill="#060608"/>
<rect x="750.16" y="383.70" width="5.30" height="24.30" fill="#2fbd5c"/>
<rect x="750.16" y="382.70" width="5.30" height="0.70" fill="#eab02a"/>
<rect x="756.02" y="382.15" width="6.40" height="25.90" fill="#060608"/>
<rect x="756.57" y="383.50" width="5.30" height="24.50" fill="#2fbd5c"/>
<rect x="756.57" y="382.70" width="5.30" height="0.50" fill="#eab02a"/>
<rect x="762.42" y="382.65" width="6.40" height="25.40" fill="#060608"/>
<rect x="762.97" y="384.10" width="5.30" height="23.90" fill="#2fbd5c"/>
<rect x="762.97" y="383.20" width="5.30" height="0.60" fill="#eab02a"/>
<rect x="768.83" y="383.35" width="6.40" height="24.70" fill="#060608"/>
<rect x="769.38" y="384.90" width="5.30" height="23.10" fill="#2fbd5c"/>
<rect x="769.38" y="383.90" width="5.30" height="0.70" fill="#eab02a"/>
<rect x="775.23" y="381.55" width="6.40" height="26.50" fill="#060608"/>
<rect x="775.78" y="383.40" width="5.30" height="24.60" fill="#2fbd5c"/>
<rect x="775.78" y="382.10" width="5.30" height="1.00" fill="#eab02a"/>
<rect x="781.63" y="377.55" width="6.40" height="30.50" fill="#060608"/>
<rect x="782.18" y="379.50" width="5.30" height="28.50" fill="#2fbd5c"/>
<rect x="782.18" y="378.10" width="5.30" height="1.10" fill="#eab02a"/>
<rect x="788.04" y="379.25" width="6.40" height="28.80" fill="#060608"/>
<rect x="788.59" y="380.90" width="5.30" height="27.10" fill="#2fbd5c"/>
<rect x="788.59" y="379.80" width="5.30" height="0.80" fill="#eab02a"/>
<rect x="794.44" y="380.55" width="6.40" height="27.50" fill="#060608"/>
<rect x="794.99" y="382.10" width="5.30" height="25.90" fill="#2fbd5c"/>
<rect x="794.99" y="381.10" width="5.30" height="0.70" fill="#eab02a"/>
<rect x="800.85" y="381.25" width="6.40" height="26.80" fill="#060608"/>
<rect x="801.40" y="382.80" width="5.30" height="25.20" fill="#2fbd5c"/>
<rect x="801.40" y="381.80" width="5.30" height="0.70" fill="#eab02a"/>
<rect x="807.25" y="380.55" width="6.40" height="27.50" fill="#060608"/>
<rect x="807.80" y="382.10" width="5.30" height="25.90" fill="#2fbd5c"/>
<rect x="807.80" y="381.10" width="5.30" height="0.70" fill="#eab02a"/>
<rect x="813.65" y="380.55" width="6.40" height="27.50" fill="#060608"/>
<rect x="814.20" y="382.10" width="5.30" height="25.90" fill="#2fbd5c"/>
<rect x="814.20" y="381.10" width="5.30" height="0.70" fill="#eab02a"/>
<rect x="820.06" y="380.55" width="6.40" height="27.50" fill="#060608"/>
<rect x="820.61" y="381.90" width="5.30" height="26.10" fill="#2fbd5c"/>
<rect x="820.61" y="381.10" width="5.30" height="0.50" fill="#eab02a"/>
<rect x="826.46" y="379.45" width="6.40" height="28.60" fill="#060608"/>
<rect x="827.01" y="381.10" width="5.30" height="26.90" fill="#2fbd5c"/>
<rect x="827.01" y="380.00" width="5.30" height="0.80" fill="#eab02a"/>
<rect x="832.87" y="380.35" width="6.40" height="27.70" fill="#060608"/>
<rect x="833.42" y="381.90" width="5.30" height="26.10" fill="#2fbd5c"/>
<rect x="833.42" y="380.90" width="5.30" height="0.70" fill="#eab02a"/>
<rect x="839.27" y="381.35" width="6.40" height="26.70" fill="#060608"/>
<rect x="839.82" y="382.80" width="5.30" height="25.20" fill="#2fbd5c"/>
<rect x="839.82" y="381.90" width="5.30" height="0.60" fill="#eab02a"/>
<rect x="845.67" y="381.35" width="6.40" height="26.70" fill="#060608"/>
<rect x="846.22" y="383.00" width="5.30" height="25.00" fill="#2fbd5c"/>
<rect x="846.22" y="381.90" width="5.30" height="0.80" fill="#eab02a"/>
<rect x="852.08" y="381.05" width="6.40" height="27.00" fill="#060608"/>
<rect x="852.63" y="382.70" width="5.30" height="25.30" fill="#2fbd5c"/>
<rect x="852.63" y="381.60" width="5.30" height="0.80" fill="#eab02a"/>
<rect x="858.48" y="379.65" width="6.40" height="28.40" fill="#060608"/>
<rect x="859.03" y="381.40" width="5.30" height="26.60" fill="#2fbd5c"/>
<rect x="859.03" y="380.20" width="5.30" height="0.90" fill="#eab02a"/>
<rect x="864.89" y="382.65" width="6.40" height="25.40" fill="#060608"/>
<rect x="865.44" y="384.20" width="5.30" height="23.80" fill="#2fbd5c"/>
<rect x="865.44" y="383.20" width="5.30" height="0.70" fill="#eab02a"/>
<rect x="871.29" y="384.55" width="6.40" height="23.50" fill="#060608"/>
<rect x="871.84" y="386.00" width="5.30" height="22.00" fill="#2fbd5c"/>
<rect x="871.84" y="385.10" width="5.30" height="0.60" fill="#eab02a"/>
<rect x="877.69" y="384.35" width="6.40" height="23.70" fill="#060608"/>
<rect x="878.24" y="385.80" width="5.30" height="22.20" fill="#2fbd5c"/>
<rect x="878.24" y="384.90" width="5.30" height="0.60" fill="#eab02a"/>
<rect x="884.10" y="384.25" width="6.40" height="23.80" fill="#060608"/>
<rect x="884.65" y="385.70" width="5.30" height="22.30" fill="#2fbd5c"/>
<rect x="884.65" y="384.80" width="5.30" height="0.60" fill="#eab02a"/>
<rect x="890.50" y="381.55" width="6.40" height="26.50" fill="#060608"/>
<rect x="891.05" y="383.00" width="5.30" height="25.00" fill="#2fbd5c"/>
<rect x="891.05" y="382.10" width="5.30" height="0.60" fill="#eab02a"/>
<rect x="896.91" y="380.55" width="6.40" height="27.50" fill="#060608"/>
<rect x="897.46" y="381.90" width="5.30" height="26.10" fill="#2fbd5c"/>
<rect x="897.46" y="381.10" width="5.30" height="0.50" fill="#eab02a"/>
<rect x="903.31" y="382.45" width="6.40" height="25.60" fill="#060608"/>
<rect x="903.86" y="383.90" width="5.30" height="24.10" fill="#2fbd5c"/>
<rect x="903.86" y="383.00" width="5.30" height="0.60" fill="#eab02a"/>
<rect x="909.71" y="383.35" width="6.40" height="24.70" fill="#060608"/>
<rect x="910.26" y="384.80" width="5.30" height="23.20" fill="#2fbd5c"/>
<rect x="910.26" y="383.90" width="5.30" height="0.60" fill="#eab02a"/>
<rect x="916.12" y="381.95" width="6.40" height="26.10" fill="#060608"/>
<rect x="916.67" y="383.40" width="5.30" height="24.60" fill="#2fbd5c"/>
<rect x="916.67" y="382.50" width="5.30" height="0.60" fill="#eab02a"/>
<rect x="922.52" y="384.05" width="6.40" height="24.00" fill="#060608"/>
<rect x="923.07" y="385.50" width="5.30" height="22.50" fill="#2fbd5c"/>
<rect x="923.07" y="384.60" width="5.30" height="0.60" fill="#eab02a"/>
<rect x="928.93" y="382.15" width="6.40" height="25.90" fill="#060608"/>
<rect x="929.48" y="383.70" width="5.30" height="24.30" fill="#2fbd5c"/>
<rect x="929.48" y="382.70" width="5.30" height="0.70" fill="#eab02a"/>
<rect x="935.33" y="379.45" width="6.40" height="28.60" fill="#060608"/>
<rect x="935.88" y="381.20" width="5.30" height="26.80" fill="#2fbd5c"/>
<rect x="935.88" y="380.00" width="5.30" height="0.90" fill="#eab02a"/>
<rect x="941.73" y="381.25" width="6.40" height="26.80" fill="#060608"/>
<rect x="942.28" y="382.80" width="5.30" height="25.20" fill="#2fbd5c"/>
<rect x="942.28" y="381.80" width="5.30" height="0.70" fill="#eab02a"/>
<rect x="948.14" y="382.25" width="6.40" height="25.80" fill="#060608"/>
<rect x="948.69" y="383.70" width="5.30" height="24.30" fill="#2fbd5c"/>
<rect x="948.69" y="382.80" width="5.30" height="0.60" fill="#eab02a"/>
<rect x="954.54" y="381.35" width="6.40" height="26.70" fill="#060608"/>
<rect x="955.09" y="383.00" width="5.30" height="25.00" fill="#2fbd5c"/>
<rect x="955.09" y="381.90" width="5.30" height="0.80" fill="#eab02a"/>
<rect x="960.95" y="380.85" width="6.40" height="27.20" fill="#060608"/>
<rect x="961.50" y="382.50" width="5.30" height="25.50" fill="#2fbd5c"/>
<rect x="961.50" y="381.40" width="5.30" height="0.80" fill="#eab02a"/>
<rect x="967.35" y="380.15" width="6.40" height="27.90" fill="#060608"/>
<rect x="967.90" y="381.80" width="5.30" height="26.20" fill="#2fbd5c"/>
<rect x="967.90" y="380.70" width="5.30" height="0.80" fill="#eab02a"/>
<rect x="973.75" y="378.75" width="6.40" height="29.30" fill="#060608"/>
<rect x="974.30" y="380.50" width="5.30" height="27.50" fill="#2fbd5c"/>
<rect x="974.30" y="379.30" width="5.30" height="0.90" fill="#eab02a"/>
<rect x="980.16" y="376.25" width="6.40" height="31.80" fill="#060608"/>
<rect x="980.71" y="378.10" width="5.30" height="29.90" fill="#2fbd5c"/>
<rect x="980.71" y="376.80" width="5.30" height="1.00" fill="#eab02a"/>
<rect x="986.56" y="376.65" width="6.40" height="31.40" fill="#060608"/>
<rect x="987.11" y="378.40" width="5.30" height="29.60" fill="#2fbd5c"/>
<rect x="987.11" y="377.20" width="5.30" height="0.90" fill="#eab02a"/>
<rect x="992.97" y="377.65" width="6.40" height="30.40" fill="#060608"/>
<rect x="993.52" y="379.50" width="5.30" height="28.50" fill="#2fbd5c"/>
<rect x="993.52" y="378.20" width="5.30" height="1.00" fill="#eab02a"/>
<rect x="999.37" y="375.35" width="6.40" height="32.70" fill="#060608"/>
<rect x="999.92" y="377.70" width="5.30" height="30.30" fill="#2fbd5c"/>
<rect x="999.92" y="375.90" width="5.30" height="1.50" fill="#eab02a"/>
<rect x="1005.77" y="373.45" width="6.40" height="34.60" fill="#060608"/>
<rect x="1006.32" y="376.30" width="5.30" height="31.70" fill="#2fbd5c"/>
<rect x="1006.32" y="374.00" width="5.30" height="2.00" fill="#eab02a"/>
<rect x="1012.18" y="374.65" width="6.40" height="33.40" fill="#060608"/>
<rect x="1012.73" y="377.90" width="5.30" height="30.10" fill="#2fbd5c"/>
<rect x="1012.73" y="375.20" width="5.30" height="2.40" fill="#eab02a"/>
<rect x="1018.58" y="376.45" width="6.40" height="31.60" fill="#060608"/>
<rect x="1019.13" y="379.60" width="5.30" height="28.40" fill="#2fbd5c"/>
<rect x="1019.13" y="377.00" width="5.30" height="2.30" fill="#eab02a"/>
<rect x="1024.99" y="376.05" width="6.40" height="32.00" fill="#060608"/>
<rect x="1025.54" y="379.50" width="5.30" height="28.50" fill="#2fbd5c"/>
<rect x="1025.54" y="376.60" width="5.30" height="2.60" fill="#eab02a"/>
<rect x="1031.39" y="375.35" width="6.40" height="32.70" fill="#060608"/>
<rect x="1031.94" y="378.80" width="5.30" height="29.20" fill="#2fbd5c"/>
<rect x="1031.94" y="375.90" width="5.30" height="2.60" fill="#eab02a"/>
<rect x="1037.79" y="375.95" width="6.40" height="32.10" fill="#060608"/>
<rect x="1038.34" y="379.10" width="5.30" height="28.90" fill="#2fbd5c"/>
<rect x="1038.34" y="376.50" width="5.30" height="2.30" fill="#eab02a"/>
<rect x="1044.20" y="373.65" width="6.40" height="34.40" fill="#060608"/>
<rect x="1044.75" y="376.80" width="5.30" height="31.20" fill="#2fbd5c"/>
<rect x="1044.75" y="374.20" width="5.30" height="2.30" fill="#eab02a"/>
<rect x="1050.60" y="371.35" width="6.40" height="36.70" fill="#060608"/>
<rect x="1051.15" y="374.70" width="5.30" height="33.30" fill="#2fbd5c"/>
<rect x="1051.15" y="371.90" width="5.30" height="2.50" fill="#eab02a"/>
<rect x="1057.01" y="375.35" width="6.40" height="32.70" fill="#060608"/>
<rect x="1057.56" y="377.70" width="5.30" height="30.30" fill="#2fbd5c"/>
<rect x="1057.56" y="375.90" width="5.30" height="1.50" fill="#eab02a"/>
<rect x="1063.41" y="372.55" width="6.40" height="35.50" fill="#060608"/>
<rect x="1063.96" y="374.90" width="5.30" height="33.10" fill="#2fbd5c"/>
<rect x="1063.96" y="373.10" width="5.30" height="1.50" fill="#eab02a"/>
<rect x="1069.81" y="367.65" width="6.40" height="40.40" fill="#060608"/>
<rect x="1070.36" y="370.10" width="5.30" height="37.90" fill="#2fbd5c"/>
<rect x="1070.36" y="368.20" width="5.30" height="1.60" fill="#eab02a"/>
<rect x="1076.22" y="358.65" width="6.40" height="49.40" fill="#060608"/>
<rect x="1076.77" y="360.70" width="5.30" height="47.30" fill="#2fbd5c"/>
<rect x="1076.77" y="359.20" width="5.30" height="1.20" fill="#eab02a"/>
<rect x="1082.62" y="342.75" width="6.40" height="65.30" fill="#060608"/>
<rect x="1083.17" y="346.30" width="5.30" height="61.70" fill="#2fbd5c"/>
<rect x="1083.17" y="343.30" width="5.30" height="2.70" fill="#eab02a"/>
 <text x="1106.5" y="262" class="ax" style="letter-spacing:0.6px">300K</text>
 <text x="1106" y="336.5" class="ax" style="letter-spacing:-0.1px">150K</text>
 <text x="1106.5" y="411.5" class="ax">0</text>
 <text x="112.5" y="425" text-anchor="middle" class="ax" style="letter-spacing:0.2px">Nov 4</text>
<text x="266.2" y="425" text-anchor="middle" class="ax" style="letter-spacing:0.2px">Nov 5</text>
<text x="419.9" y="425" text-anchor="middle" class="ax" style="letter-spacing:0.2px">Nov 6</text>
<text x="573.6" y="425" text-anchor="middle" class="ax" style="letter-spacing:0.2px">Nov 7</text>
<text x="727.2" y="425" text-anchor="middle" class="ax" style="letter-spacing:0.2px">Nov 8</text>
<text x="880.9" y="425" text-anchor="middle" class="ax" style="letter-spacing:0.2px">Nov 9</text>
<text x="1034.6" y="425" text-anchor="middle" class="ax" style="letter-spacing:0.2px">Nov 10</text>
</svg>
<div class="list">
<div class="row"><span class="badge">200</span><span class="path" style="letter-spacing:-0.1px">GET /config</span><span class="time">08:58</span></div>
<div class="row"><span class="badge">200</span><span class="path">GET /notifications</span><span class="time">08:58</span></div>
<div class="row"><span class="badge">200</span><span class="path" style="letter-spacing:-0.2px">POST /ws/auth</span><span class="time">08:58</span></div>
<div class="row"><span class="badge">200</span><span class="path">GET /notification_preferences</span><span class="time">08:58</span></div>
<div class="row"><span class="badge">200</span><span class="path">GET /notifications</span><span class="time">08:58</span></div>
<div class="row"><span class="badge">200</span><span class="path">GET /notifications</span><span class="time">08:58</span></div>
<div class="row"><span class="badge">200</span><span class="path">GET /notifications</span><span class="time">08:58</span></div>
</div>
</div></body></html>
